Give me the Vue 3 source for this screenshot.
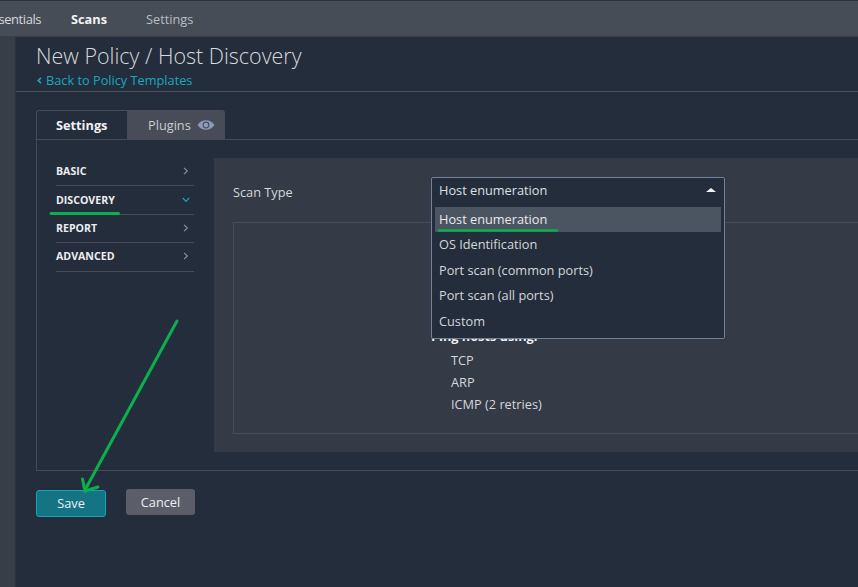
<template>
  <div class="page">
    <header class="topbar">
      <span class="brand">Essentials</span>
      <span class="nav-item active">Scans</span>
      <span class="nav-item">Settings</span>
    </header>

    <div class="body">
      <aside class="rail"></aside>
      <main class="main">
        <div class="title-block">
          <h1>New Policy / Host Discovery</h1>
          <a class="back">
            <svg width="5" height="7" viewBox="0 0 5 7">
              <path d="M4 0.8L1.2 3.5L4 6.2" fill="none" stroke="#17a9bd" stroke-width="1.6" />
            </svg>
            Back to Policy Templates
          </a>
        </div>

        <div class="tabs">
          <div class="tab current">Settings</div>
          <div class="tab">
            Plugins
            <svg class="eye" width="18" height="10" viewBox="0 0 18 10">
              <path d="M0.5 5C3 1.6 6 0.2 9 0.2s6 1.4 8.5 4.8C15 8.4 12 9.8 9 9.8S3 8.4 0.5 5z" fill="#8c9bbd" />
              <circle cx="9" cy="5" r="3.4" fill="#4a4f5a" />
              <circle cx="9" cy="5" r="2.3" fill="#8c9bbd" />
            </svg>
          </div>
        </div>

        <section class="panel">
          <ul class="side">
            <li v-for="item in sections" :key="item" :class="{ open: item === 'DISCOVERY' }">
              <span>{{ item }}</span>
              <svg width="6" height="8" viewBox="0 0 6 8" class="chev" :class="{ down: item === 'DISCOVERY' }">
                <path d="M1 0.8L4.4 4L1 7.2" fill="none" stroke="currentColor" stroke-width="1.1" />
              </svg>
            </li>
          </ul>

          <div class="content">
            <div class="scan-row">
              <label>Scan Type</label>
              <div class="select">
                <div class="select-head">
                  <span>Host enumeration</span>
                  <i class="caret"></i>
                </div>
                <div
                  v-for="(opt, i) in options"
                  :key="opt"
                  class="option"
                  :class="{ selected: i === 0 }"
                >{{ opt }}</div>
              </div>
            </div>
            <div class="inner">
              <div class="ping">
                <strong>Ping hosts using:</strong>
                <div class="ping-item" v-for="p in pings" :key="p">{{ p }}</div>
              </div>
            </div>
          </div>
        </section>

        <div class="actions">
          <button class="btn save">Save</button>
          <button class="btn cancel">Cancel</button>
        </div>
      </main>
    </div>

    <!-- green marks drawn over the screenshot -->
    <svg class="marks" width="858" height="587" viewBox="0 0 858 587">
      <g fill="none" stroke="#0ab04e" stroke-linecap="round">
        <path d="M51 213.5H118.5" stroke-width="3" />
        <path d="M439 230.5H557" stroke-width="2.5" />
        <path d="M177 321L85 490" stroke-width="3" />
        <path d="M82.5 479L85 491L98 487" stroke-width="3" />
      </g>
    </svg>
  </div>
</template>

<script setup>
const sections = ['BASIC', 'DISCOVERY', 'REPORT', 'ADVANCED']
const options = [
  'Host enumeration',
  'OS Identification',
  'Port scan (common ports)',
  'Port scan (all ports)',
  'Custom'
]
const pings = ['TCP', 'ARP', 'ICMP (2 retries)']
</script>

<style>
html,
body {
  margin: 0;
  background: #242d3b;
}
</style>

<style scoped>
.page {
  position: relative;
  width: 858px;
  height: 587px;
  overflow: hidden;
  background: #242d3b;
  color: #e8eaed;
  font-family: "Open Sans", "Liberation Sans", sans-serif;
  font-size: 12.75px;
}

.topbar {
  display: flex;
  align-items: center;
  height: 35px;
  border-top: 1px solid #2b313b;
  border-bottom: 1px solid #3a404a;
  background: #474d57;
}

.brand {
  display: flex;
  justify-content: flex-end;
  white-space: nowrap;
  width: 41px;
  margin-right: 30px;
  font-size: 13px;
  letter-spacing: -0.45px;
  color: #d6d8dc;
  flex: none;
}

.nav-item {
  margin-right: 39px;
  color: #b9bdc3;
}

.nav-item.active {
  color: #f2f3f4;
  font-weight: 700;
}

.body {
  display: flex;
  height: 550px;
}

.rail {
  width: 15px;
  flex: none;
  background: #383e48;
  border-right: 1px solid #2d333d;
}

.main {
  flex: 1;
  min-width: 0;
}

.title-block {
  height: 54px;
  padding-left: 20px;
  border-bottom: 1px solid #4a505a;
}

h1 {
  margin: 0;
  padding-top: 4px;
  font-size: 21.5px;
  line-height: 30px;
  font-weight: 300;
  color: #d8dade;
}

.back {
  display: flex;
  align-items: center;
  gap: 4px;
  padding-left: 1px;
  line-height: 18px;
  color: #17a9bd;
}

.tabs {
  display: flex;
  margin: 18px 0 0 20px;
  height: 29px;
}

.tab {
  display: flex;
  align-items: center;
  gap: 6px;
  width: 97px;
  padding-left: 20px;
  box-sizing: border-box;
  background: #474c58;
  color: #c9ccd1;
  border-radius: 0 3px 0 0;
}

.tab.current {
  width: 92px;
  padding-left: 19px;
  background: #242d3b;
  color: #f0f1f3;
  font-weight: 700;
  border: 1px solid #474c58;
  border-bottom: none;
  border-radius: 3px 0 0 0;
}

.panel {
  display: flex;
  height: 332px;
  box-sizing: border-box;
  margin-left: 20px;
  border: 1px solid #474c58;
  border-right: none;
  position: relative;
}

.side {
  list-style: none;
  margin: 18px 0 0;
  padding: 0 0 0 19px;
  width: 138px;
  flex: none;
}

.side li {
  display: flex;
  align-items: center;
  justify-content: space-between;
  height: 28.4px;
  box-sizing: border-box;
  border-bottom: 1px solid #474c58;
  padding: 0 5px 1px 0;
  font-size: 10.6px;
  font-weight: 700;
  color: #eceef0;
}

.chev {
  color: #8793aa;
}

.chev.down {
  transform: rotate(90deg);
  color: #17a9bd;
}

.content {
  flex: 1;
  min-width: 0;
  margin: 18px 0 0 20px;
  height: 294px;
  background: #343a46;
  padding-left: 19px;
}

.scan-row {
  display: flex;
  height: 64px;
  position: relative;
  color: #d5d7db;
}

.scan-row label {
  width: 197px;
  margin-top: 25px;
  line-height: 18px;
}

.select {
  position: relative;
  z-index: 2;
  width: 294px;
  height: 162px;
  margin: 19px 0 0 1px;
  box-sizing: border-box;
  background: #242d3b;
  border: 1px solid #73809a;
  border-radius: 2px;
  padding: 0 3px;
}

.select-head {
  display: flex;
  align-items: center;
  justify-content: space-between;
  height: 28.5px;
  padding: 0 5px 4px 4px;
  box-sizing: border-box;
  color: #dde0e3;
}

.caret {
  width: 0;
  height: 0;
  border: 5px solid transparent;
  border-top: none;
  border-bottom: 4px solid #f2f3f4;
}

.option {
  height: 25.6px;
  line-height: 25px;
  padding-left: 4px;
  color: #d5d8dc;
}

.option.selected {
  background: #4a5561;
  color: #e8eaed;
}

.inner {
  box-sizing: border-box;
  height: 212px;
  border: 1px solid #474c58;
  border-right: none;
  position: relative;
}

.ping {
  padding: 103px 0 0 197px;
  color: #d5d7db;
}

.ping strong {
  display: block;
  line-height: 20px;
  margin-bottom: 3px;
  color: #f0f1f3;
}

.ping-item {
  padding-left: 20px;
  line-height: 22px;
}

.actions {
  display: flex;
  gap: 20px;
  margin: 19px 0 0 20px;
  align-items: flex-start;
}

.btn {
  box-sizing: border-box;
  font-family: inherit;
  font-size: 12.75px;
  color: #eef0f2;
  border-radius: 3px;
  padding: 0;
}

.save {
  width: 70px;
  height: 27px;
  padding-bottom: 1px;
  background: #147484;
  border: 1px solid #12a4b8;
}

.cancel {
  width: 69px;
  height: 26px;
  margin-top: -1px;
  background: #5b5e69;
  border: none;
}

.marks {
  position: absolute;
  left: 0;
  top: 0;
  pointer-events: none;
  z-index: 3;
}
</style>
